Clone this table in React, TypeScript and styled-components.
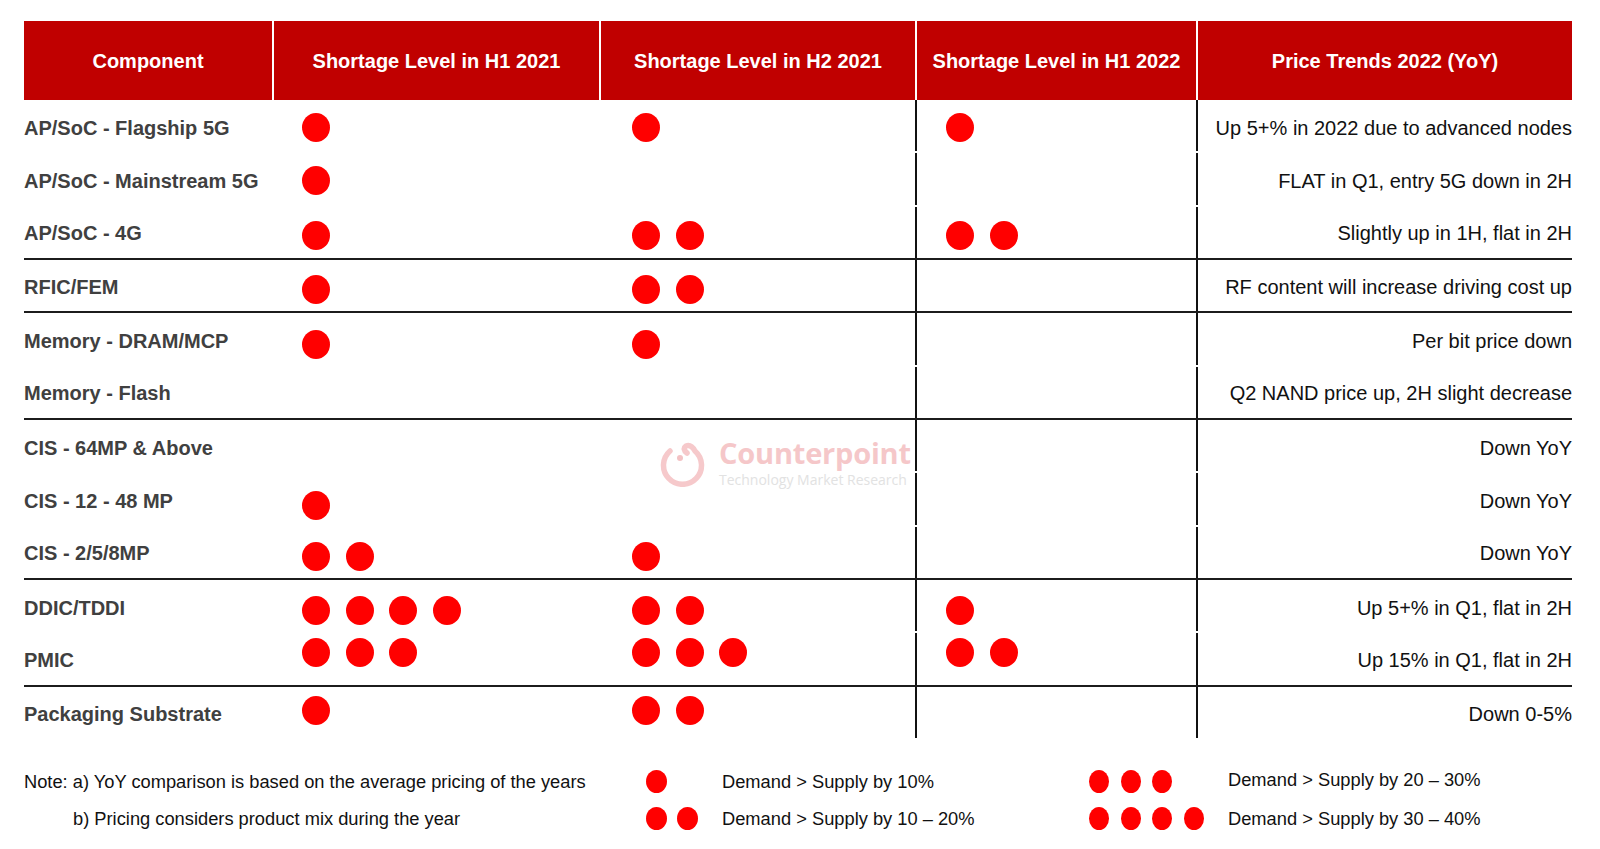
import React from 'react';
import styled, { createGlobalStyle } from 'styled-components';

interface RowData {
  name: string;
  dots: [number, number, number];
  trend: string;
  divider?: boolean;
  shift: number;
}

const rows: RowData[] = [
  { name: 'AP/SoC - Flagship 5G', dots: [1, 1, 1], trend: 'Up 5+% in 2022 due to advanced nodes', shift: 1 },
  { name: 'AP/SoC - Mainstream 5G', dots: [1, 0, 0], trend: 'FLAT in Q1, entry 5G down in 2H', shift: 1 },
  { name: 'AP/SoC - 4G', dots: [1, 2, 2], trend: 'Slightly up in 1H, flat in 2H', divider: true, shift: 3 },
  { name: 'RFIC/FEM', dots: [1, 2, 0], trend: 'RF content will increase driving cost up', divider: true, shift: 4 },
  { name: 'Memory - DRAM/MCP', dots: [1, 1, 0], trend: 'Per bit price down', shift: 5 },
  { name: 'Memory - Flash', dots: [0, 0, 0], trend: 'Q2 NAND price up, 2H slight decrease', divider: true, shift: 0 },
  { name: 'CIS - 64MP & Above', dots: [0, 0, 0], trend: 'Down YoY', shift: 0 },
  { name: 'CIS - 12 - 48 MP', dots: [1, 0, 0], trend: 'Down YoY', shift: 6 },
  { name: 'CIS - 2/5/8MP', dots: [2, 1, 0], trend: 'Down YoY', divider: true, shift: 4 },
  { name: 'DDIC/TDDI', dots: [4, 2, 1], trend: 'Up 5+% in Q1, flat in 2H', shift: 4 },
  { name: 'PMIC', dots: [3, 3, 2], trend: 'Up 15% in Q1, flat in 2H', divider: true, shift: -6 },
  { name: 'Packaging Substrate', dots: [1, 2, 0], trend: 'Down 0-5%', shift: -3 },
];

const headers = [
  'Component',
  'Shortage Level in H1 2021',
  'Shortage Level in H2 2021',
  'Shortage Level in H1 2022',
  'Price Trends 2022 (YoY)',
];

// left inset of the dots inside each shortage column
const dotInsets = [30, 33, 31];

const legend = [
  { count: 1, text: 'Demand > Supply by 10%' },
  { count: 2, text: 'Demand > Supply by 10 – 20%' },
  { count: 3, text: 'Demand > Supply by 20 – 30%' },
  { count: 4, text: 'Demand > Supply by 30 – 40%' },
];

const Dots: React.FC<{ count: number; size?: number; height?: number; gap?: number }> = ({
  count,
  size = 28,
  height = 29,
  gap = 15.5,
}) => (
  <DotGroup $gap={gap}>
    {Array.from({ length: count }).map((_, i) => (
      <Dot key={i} $w={size} $h={height} />
    ))}
  </DotGroup>
);

const Watermark: React.FC = () => (
  <Mark>
    <svg width="46" height="54" viewBox="0 0 46 54">
      <path
        d="M10 18 A19 19 0 1 0 35 18 Q31 11 26 13 Q22 16 27 20"
        fill="none"
        stroke="#f6c9cb"
        strokeWidth="5.5"
        strokeLinecap="round"
        strokeLinejoin="round"
      />
      <circle cx="20" cy="25" r="3" fill="#f3c2c4" />
    </svg>
    <MarkText>
      <MarkTitle>Counterpoint</MarkTitle>
      <MarkSub>Technology Market Research</MarkSub>
    </MarkText>
  </Mark>
);

export default function App() {
  return (
    <Page>
      <GlobalStyle />
      <Table>
        <HeaderRow>
          {headers.map((h, i) => (
            <HeaderCell key={h} $first={i === 0}>
              {h}
            </HeaderCell>
          ))}
        </HeaderRow>
        {rows.map((r) => (
          <BodyRow key={r.name} $divider={!!r.divider}>
            <NameCell>{r.name}</NameCell>
            {r.dots.map((d, i) => (
              <DotCell key={i} $inset={dotInsets[i]} $shift={r.shift} $line={i === 2} $divider={!!r.divider}>
                {d > 0 && <Dots count={d} />}
              </DotCell>
            ))}
            <TrendCell $divider={!!r.divider}>{r.trend}</TrendCell>
          </BodyRow>
        ))}
      </Table>
      <Legend>
        <NoteText>Note: a) YoY comparison is based on the average pricing of the years</NoteText>
        <LegendDots>
          <Dots count={legend[0].count} size={21} height={23} gap={10} />
        </LegendDots>
        <LegendText>{legend[0].text}</LegendText>
        <LegendDots>
          <Dots count={legend[2].count} size={20} height={23} gap={11.5} />
        </LegendDots>
        <LegendText $up>{legend[2].text}</LegendText>

        <NoteText $indent>b) Pricing considers product mix during the year</NoteText>
        <LegendDots>
          <Dots count={legend[1].count} size={21} height={23} gap={10} />
        </LegendDots>
        <LegendText>{legend[1].text}</LegendText>
        <LegendDots>
          <Dots count={legend[3].count} size={20} height={23} gap={11.5} />
        </LegendDots>
        <LegendText>{legend[3].text}</LegendText>
      </Legend>
      <Watermark />
    </Page>
  );
}

const GlobalStyle = createGlobalStyle`
  html, body {
    margin: 0;
    padding: 0;
    background: #ffffff;
  }
  body {
    font-family: "Liberation Sans", Arial, sans-serif;
  }
`;

const Page = styled.div`
  position: relative;
  width: 1600px;
  height: 849px;
  padding: 21px 0 0 24px;
  box-sizing: border-box;
  overflow: hidden;
`;

const Table = styled.div`
  width: 1548px;
`;

const columns = '248px 327px 316px 281px 376px';

const HeaderRow = styled.div`
  display: grid;
  grid-template-columns: ${columns};
  height: 79px;
  background: #c00000;
`;

const HeaderCell = styled.div<{ $first: boolean }>`
  display: flex;
  align-items: center;
  justify-content: center;
  padding-top: 2px;
  color: #ffffff;
  font-size: 20px;
  font-weight: 700;
  border-left: ${(p) => (p.$first ? 'none' : '2px solid #ffffff')};
`;

const BodyRow = styled.div<{ $divider: boolean }>`
  display: grid;
  grid-template-columns: ${columns};
  height: 53.333px;
  box-sizing: border-box;
  border-bottom: ${(p) => (p.$divider ? '2px solid #1c1c1c' : 'none')};
`;

const NameCell = styled.div`
  display: flex;
  align-items: center;
  padding-top: 3px;
  color: #404040;
  font-size: 20px;
  font-weight: 700;
  white-space: nowrap;
`;

const DotCell = styled.div<{ $inset: number; $shift: number; $line: boolean; $divider: boolean }>`
  position: relative;
  display: flex;
  align-items: center;
  padding-left: ${(p) => p.$inset}px;

  & > div {
    transform: translateY(${(p) => p.$shift}px);
  }

  &::before {
    content: '';
    display: ${(p) => (p.$line ? 'block' : 'none')};
    position: absolute;
    left: 0;
    top: 0;
    bottom: ${(p) => (p.$divider ? '0' : '2px')};
    width: 2px;
    background: #111111;
  }
`;

const TrendCell = styled.div<{ $divider: boolean }>`
  position: relative;
  display: flex;
  align-items: center;
  justify-content: flex-end;
  padding-top: 3px;
  color: #111111;
  font-size: 20px;
  white-space: nowrap;

  &::before {
    content: '';
    position: absolute;
    left: 0;
    top: 0;
    bottom: ${(p) => (p.$divider ? '0' : '2px')};
    width: 2px;
    background: #111111;
  }
`;

const DotGroup = styled.div<{ $gap: number }>`
  display: flex;
  gap: ${(p) => p.$gap}px;
`;

const Dot = styled.span<{ $w: number; $h: number }>`
  display: block;
  width: ${(p) => p.$w}px;
  height: ${(p) => p.$h}px;
  border-radius: 50%;
  background: #ff0000;
`;

const Legend = styled.div`
  display: grid;
  grid-template-columns: 622px 76px 367px 139px auto;
  grid-auto-rows: 37px;
  margin-top: 24px;
  color: #111111;
  font-size: 18.3px;
`;

const NoteText = styled.div<{ $indent?: boolean }>`
  display: flex;
  align-items: center;
  padding-left: ${(p) => (p.$indent ? '49px' : '0')};
  white-space: nowrap;
`;

const LegendDots = styled.div`
  display: flex;
  align-items: center;
  margin-top: -2px;
`;

const LegendText = styled.div<{ $up?: boolean }>`
  display: flex;
  align-items: center;
  white-space: nowrap;
  margin-top: ${(p) => (p.$up ? '-4px' : '0')};
`;

const Mark = styled.div`
  position: absolute;
  left: 660px;
  top: 433px;
  display: flex;
  align-items: flex-start;
  gap: 13px;
  pointer-events: none;
`;

const MarkText = styled.div`
  display: flex;
  flex-direction: column;
  padding-top: 4px;
`;

const MarkTitle = styled.span`
  font-family: "Open Sans", "Liberation Sans", sans-serif;
  font-weight: 700;
  font-size: 29px;
  line-height: 32px;
  color: #f5c7c9;
  letter-spacing: -0.2px;
`;

const MarkSub = styled.span`
  font-family: "Open Sans", "Liberation Sans", sans-serif;
  font-size: 14px;
  line-height: 16px;
  margin-top: 3px;
  color: #e2e2e2;
`;
